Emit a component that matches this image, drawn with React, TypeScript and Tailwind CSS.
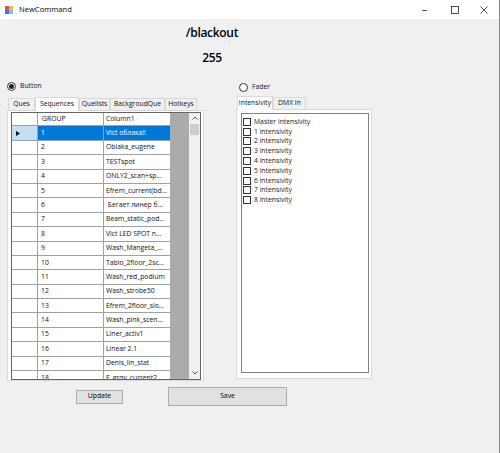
import React from "react";

const rows: [string, string][] = [
  ["1", "Vict облака!!"],
  ["2", "Oblaka_eugene"],
  ["3", "TESTspot"],
  ["4", "ONLY2_scan+sp..."],
  ["5", "Efrem_current(bd..."],
  ["6", " Бегает линер б..."],
  ["7", "Beam_static_pod..."],
  ["8", "Vict LED SPOT n..."],
  ["9", "Wash_Mangeta_..."],
  ["10", "Tablo_2floor_2sc..."],
  ["11", "Wash_red_podium"],
  ["12", "Wash_strobe50"],
  ["13", "Efrem_2floor_slo..."],
  ["14", "Wash_pink_scen..."],
  ["15", "Liner_activ1"],
  ["16", "Linear 2.1"],
  ["17", "Denis_lin_stat"],
  ["18", "E_grqv_current2"],
];

const channels = [
  "Master intensivity",
  "1 intensivity",
  "2 intensivity",
  "3 intensivity",
  "4 intensivity",
  "5 intensivity",
  "6 intensivity",
  "7 intensivity",
  "8 intensivity",
];

function Radio({ checked, label }: { checked?: boolean; label: string }) {
  return (
    <div className="flex items-center h-[10px]">
      <div className="w-[9px] h-[9px] rounded-full border border-[#333333] bg-white flex items-center justify-center">
        {checked && <div className="w-[5px] h-[5px] rounded-full bg-[#222222]" />}
      </div>
      <span className="ml-[4px] text-[6.8px] text-[#111111]">{label}</span>
    </div>
  );
}

function Tab({ label, w, active }: { label: string; w: string; active?: boolean }) {
  return active ? (
    <div
      className={`${w} h-[14px] -mb-[1px] relative z-10 bg-white border border-b-0 border-[#d9d9d9] flex items-center justify-center text-[6.8px] text-[#111111]`}
    >
      {label}
    </div>
  ) : (
    <div
      className={`${w} h-[12px] bg-[#f0f0f0] border border-b-0 border-[#d9d9d9] flex items-center justify-center text-[6.8px] text-[#111111]`}
    >
      {label}
    </div>
  );
}

function Chevron({ up }: { up?: boolean }) {
  return (
    <svg width="6" height="4" viewBox="0 0 6 4" className="mx-auto">
      <polyline
        points={up ? "0.5,3.5 3,1 5.5,3.5" : "0.5,0.5 3,3 5.5,0.5"}
        fill="none"
        stroke="#555555"
        strokeWidth="1"
      />
    </svg>
  );
}

function SequenceGrid() {
  return (
    <div className="w-[190px] h-[268px] border border-[#646464] flex overflow-hidden bg-white">
      <div className="w-[158px] flex flex-col">
        <div className="flex h-[13.4px] shrink-0">
          <div className="w-[26px] border-r border-b border-[#a0a0a0]" />
          <div className="w-[66px] border-r border-b border-[#a0a0a0] pl-[4px] flex items-center">GROUP</div>
          <div className="w-[66px] border-b border-[#a0a0a0] pl-[2px] flex items-center">Column1</div>
        </div>
        {rows.map(([g, name], i) => (
          <div key={g} className="flex h-[14.4px] shrink-0">
            <div
              className={`w-[26px] border-r border-b border-[#a0a0a0] flex items-center pl-[4px] ${
                i === 0 ? "bg-[#c6def5]" : "bg-white"
              }`}
            >
              {i === 0 && (
                <svg width="4" height="5" viewBox="0 0 4 5">
                  <polygon points="0,0 4,2.5 0,5" fill="#111111" />
                </svg>
              )}
            </div>
            <div
              className={`w-[66px] border-r border-b border-[#a0a0a0] pl-[3px] flex items-center ${
                i === 0 ? "bg-[#0078d7] text-white" : ""
              }`}
            >
              {g}
            </div>
            <div
              className={`w-[66px] border-b border-[#a0a0a0] pl-[2px] flex items-center whitespace-pre overflow-hidden ${
                i === 0 ? "bg-[#0078d7] text-white" : ""
              }`}
            >
              {name}
            </div>
          </div>
        ))}
      </div>
      <div className="w-[19px] bg-[#ababab]" />
      <div className="w-[11px] bg-[#f0f0f0] flex flex-col">
        <div className="h-[10px] pt-[3px]">
          <Chevron up />
        </div>
        <div className="mt-[1px] mx-[1px] h-[11px] bg-[#cdcdcd]" />
        <div className="flex-1" />
        <div className="h-[10px] pt-[2px]">
          <Chevron />
        </div>
      </div>
    </div>
  );
}

export default function App() {
  return (
    <div className="w-[500px] h-[453px] bg-[#f0f0f0] border-r border-[#888888] flex flex-col font-['Open_Sans',sans-serif] text-[6.8px] text-[#111111] overflow-hidden">
      {/* title bar */}
      <div className="h-[19px] bg-white flex items-center shrink-0">
        <svg width="8" height="8" viewBox="0 0 8 8" className="ml-[5px]">
          <rect x="0" y="0" width="4" height="4" fill="#e0533c" />
          <rect x="4" y="0" width="4" height="4" fill="#f2c23a" />
          <rect x="0" y="4" width="4" height="4" fill="#3c78d8" />
          <rect x="4" y="4" width="4" height="4" fill="#8fb8ea" />
        </svg>
        <span className="ml-[6px] text-[7.6px] text-black">NewCommand</span>
        <div className="flex-1" />
        <svg width="7" height="7" viewBox="0 0 7 7" className="mr-[23px]">
          <line x1="1" y1="4.5" x2="6" y2="4.5" stroke="#222" strokeWidth="0.8" />
        </svg>
        <svg width="8" height="8" viewBox="0 0 8 8" className="mr-[21px]">
          <rect x="0.5" y="0.5" width="7" height="7" fill="none" stroke="#222" strokeWidth="0.8" />
        </svg>
        <svg width="8" height="8" viewBox="0 0 8 8" className="mr-[11px]">
          <line x1="0.5" y1="0.5" x2="7.5" y2="7.5" stroke="#222" strokeWidth="0.8" />
          <line x1="7.5" y1="0.5" x2="0.5" y2="7.5" stroke="#222" strokeWidth="0.8" />
        </svg>
      </div>

      {/* command header */}
      <div className="w-[424px] flex flex-col items-center font-semibold text-[12px] tracking-[-0.3px] leading-[15px] text-black">
        <div className="mt-[6px]">/blackout</div>
        <div className="mt-[10px]">255</div>
      </div>

      {/* groups */}
      <div className="flex mt-[16px]">
        <div className="ml-[7px] w-[197px] flex flex-col">
          <Radio checked label="Button" />
          <div className="mt-[5px] h-[14px] flex items-end pl-[1px]">
            <Tab label="Ques" w="w-[27px]" />
            <Tab label="Sequences" w="w-[44px]" active />
            <Tab label="Quelists" w="w-[31px]" />
            <Tab label="BackgroudQue" w="w-[55px]" />
            <Tab label="Hotkeys" w="w-[32px]" />
          </div>
          <div className="h-[271px] border border-[#d9d9d9] bg-white pl-[3px] pt-[1px]">
            <SequenceGrid />
          </div>
        </div>

        <div className="ml-[32px] w-[136px] flex flex-col">
          <div className="pl-[3px] mt-[1px]">
            <Radio label="Fader" />
          </div>
          <div className="mt-[3px] h-[14px] flex items-end pl-[1px]">
            <Tab label="Intensivity" w="w-[36px]" active />
            <Tab label="DMX In" w="w-[33px]" />
          </div>
          <div className="h-[270px] border border-[#d9d9d9] bg-white pl-[4px] pt-[3px]">
            <div className="w-[128px] h-[260px] border border-[#828282] pl-[1px] pt-[3px] flex flex-col">
              {channels.map((c) => (
                <div key={c} className="h-[9.8px] flex items-center">
                  <div className="w-[8px] h-[8px] border border-[#333333] bg-white" />
                  <span className="ml-[3px] text-[6.8px] text-[#1a1a1a]">{c}</span>
                </div>
              ))}
            </div>
          </div>
        </div>
      </div>

      {/* buttons */}
      <div className="flex items-center mt-[6px]">
        <button className="ml-[76px] w-[47px] h-[14px] bg-[#e1e1e1] border border-[#adadad] text-[6.8px] text-black flex items-center justify-center">
          Update
        </button>
        <button className="ml-[45px] w-[119px] h-[19px] bg-[#e1e1e1] border border-[#adadad] text-[6.8px] text-black flex items-center justify-center">
          Save
        </button>
      </div>
    </div>
  );
}
